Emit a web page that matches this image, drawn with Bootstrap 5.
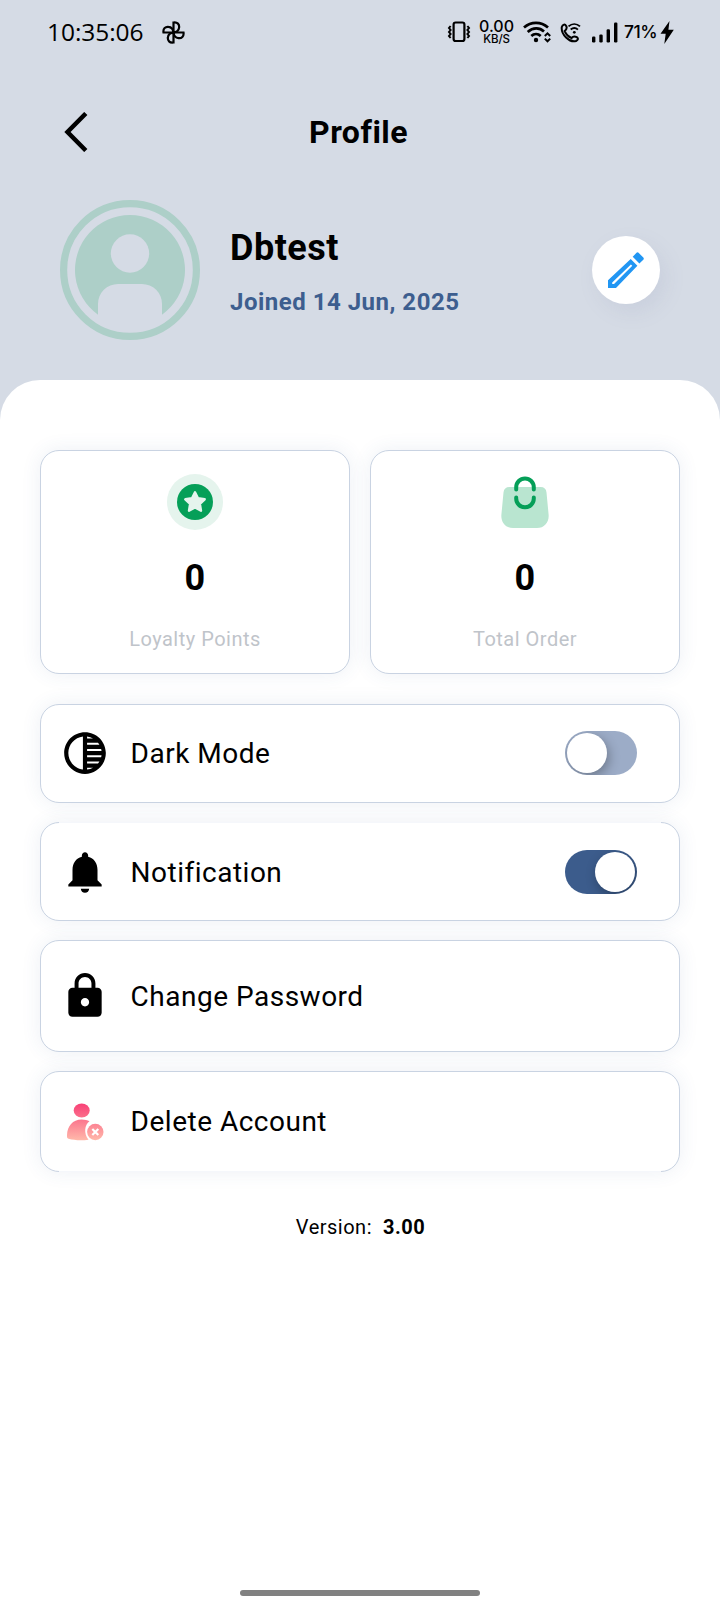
<!DOCTYPE html>
<html lang="en">
<head>
<meta charset="utf-8">
<meta name="viewport" content="width=device-width, initial-scale=1">
<title>Profile</title>
<link href="https://cdn.jsdelivr.net/npm/bootstrap@5.3.0/dist/css/bootstrap.min.css" rel="stylesheet">
<style>
  :root { --haze: #d5dbe5; --navy: #3c5c8c; --line: #c9d3e2; }
  body { font-family: Roboto, "Liberation Sans", sans-serif; color: #000; background: var(--haze); letter-spacing: .5px; }
  .screen { width: 720px; height: 1600px; }
  svg { display: block; flex: none; }
  .status { height: 64px; padding-left: 47px; padding-right: 46px; letter-spacing: 0; }
  .clock { font: 400 24.5px/62px "Open Sans", sans-serif; letter-spacing: -.05px; width: 115px; }
  .rate { font: 500 16px/17px Inter, sans-serif; width: 35px; margin-left: 8px; margin-top: -2px; }
  .rate small { font-size: 11.5px; line-height: 11px; margin-top: -1px; letter-spacing: -.1px; }
  .battery { font: 500 17.5px/64px Inter, sans-serif; letter-spacing: -.5px; width: 36px; margin-left: 6px; }
  .topbar { height: 136px; padding: 0 64px; }
  .topbar h1 { font-size: 32px; line-height: 136px; font-weight: 700; width: 97px; margin-left: 221px; }
  .person { height: 180px; padding: 0 60px; }
  .person h2 { font-size: 36px; line-height: 44px; font-weight: 700; margin: 26px 0 0; }
  .joined { font-size: 24px; line-height: 30px; font-weight: 700; color: #3d5e8f; margin-top: 17px; }
  .about { margin-left: 30px; }
  .edit { width: 68px; height: 68px; box-shadow: 6px 8px 20px rgba(120,135,170,.13); margin-top: 36px; }
  .sheet { border-radius: 40px 40px 0 0; padding: 70px 40px 4px; }
  .tile { background: #fff; border: 1px solid var(--line); border-radius: 19px; box-shadow: 0 0 20px rgba(60,92,140,.09); }
  .stat { height: 224px; padding-top: 23px; }
  .stat strong { font-size: 36px; line-height: 40px; margin-top: 28px; }
  .stat span { font-size: 20px; line-height: 24px; color: #bfc4ca; margin-top: 29px; }
  .stats { gap: 20px; margin-bottom: 30px; }
  .option { height: 99px; padding: 0 42px 0 19px; font-size: 28px; line-height: 36px; margin-bottom: 19px; }
  .option > span { margin-left: 20.6px; }
  .option.drop > span { padding-top: 2px; }
  .open-top::before, .open-bottom::after { content: ""; position: absolute; left: 18px; right: 18px; height: 1px; background: #f5f7fb; }
  .open-top::before { top: -1px; }
  .open-bottom::after { bottom: -1px; }
  .tall { height: 112px; }
  .closing { height: 101px; }
  .switch { width: 72px; height: 44px; padding: 2px; background: #9cacc7; overflow: hidden; margin-top: -1px; }
  .switch i { width: 40px; height: 40px; background: #fff; box-shadow: 2px 4px 12px rgba(0,0,0,.3); }
  .switch.on { background: var(--navy); margin-top: 0; }
  .version { font-size: 20px; line-height: 28px; margin-top: 41px; padding-left: 1px; }
  .homebar { width: 240px; height: 6px; background: #818181; }
</style>
</head>
<body>
<div class="screen d-flex flex-column overflow-hidden">
  <div class="status d-flex align-items-center">
    <span class="clock">10:35:06</span>
    <svg width="23" height="23" viewBox="-11.5 -11.5 23 23" fill="none" stroke="#000" stroke-width="2.2">
      <g id="blade"><path d="M0 0V-10C4-10.6 6-8 5.6-5C5.3-2 3.5-.4 0 0Z"/></g>
      <use href="#blade" transform="rotate(90)"/><use href="#blade" transform="rotate(180)"/><use href="#blade" transform="rotate(270)"/>
    </svg>
    <div class="d-flex align-items-center ms-auto">
      <svg width="24" height="22" viewBox="0 0 24 22" fill="none" stroke="#000" stroke-width="2.2">
        <rect x="6.6" y="1.5" width="10.8" height="18.5" rx="2"/>
        <path stroke-width="2" d="M3.600 5 2 7l1.600 2L2 11l1.600 2L2 15l1.600 2M20.400 5 22 7l-1.600 2 1.600 2-1.600 2 1.600 2-1.600 2"/>
      </svg>
      <div class="rate d-flex flex-column align-items-center"><span>0.00</span><small>KB/S</small></div>
      <svg width="28" height="22" viewBox="0 0 28 22" fill="none" stroke="#000" stroke-width="2.7" style="margin-left:9px">
        <path d="M1 6.500C8 .3 18 .3 25 6.500M4.700 11C10 6.300 16.500 6.300 21 10.500M8.300 15C11 12.500 15 12.500 17.700 15"/>
        <circle cx="13" cy="19" r="2.2" fill="#000" stroke="none"/>
        <path stroke-width="2" d="m21.800 15 2.700-2.700 2.700 2.700M21.800 17.600l2.700 2.700 2.700-2.700"/>
      </svg>
      <svg width="21" height="21" viewBox="0 0 21 21" fill="none" stroke="#000" stroke-width="2" style="margin-left:9px">
        <path d="M1.800 5C2.600 2.200 5 1.800 6.300 4.200C7.300 6.400 6.300 7.800 4.600 9C6 12.200 8.300 14.600 11.500 16C13 14.200 14.800 14 16.800 15.200C18.700 16.500 18 18 16 19C9.500 20.800 .8 12.300 1.800 5Z"/>
        <path stroke-width="1.9" d="M8.500 4.400C12 1.300 16.500 1.300 20 4.400M10.700 7.600C13 5.700 15.700 5.700 17.900 7.600"/>
        <circle cx="14.3" cy="10.3" r="1.4" fill="#000" stroke="none"/>
      </svg>
      <svg width="27" height="21" viewBox="0 0 27 21" style="margin-left:10px">
        <rect x="1" y="14.5" width="3.4" height="6" rx="1.2"/><rect x="8.3" y="12.5" width="3.4" height="8" rx="1.2"/><rect x="15.6" y="7.3" width="3.4" height="13.2" rx="1.2"/><rect x="23" y="0.5" width="3.4" height="20" rx="1.2"/>
      </svg>
      <span class="battery">71%</span>
      <svg width="14" height="23" viewBox="0 0 14 23"><path d="M9.500 0 .5 12.800h5.200L4.300 23 13.800 8.800H8.400Z"/></svg>
    </div>
  </div>

  <header class="topbar d-flex align-items-center">
    <svg width="24" height="40" viewBox="0 0 24 40" fill="none" stroke="#000" stroke-width="4.5"><path d="M21.800 1.500 3.500 20l18.300 18.500"/></svg>
    <h1 class="mb-0 text-nowrap">Profile</h1>
  </header>

  <section class="person d-flex">
    <svg width="140" height="140" viewBox="0 0 140 140">
      <circle cx="70" cy="70" r="66.4" fill="none" stroke="#adcfc8" stroke-width="7.2"/>
      <path fill="#adcfc8" d="M38 114.700A55 55 0 1 1 102 114.700V104A20 20 0 0 0 82 84H58A20 20 0 0 0 38 104Z"/>
      <circle cx="70" cy="53.5" r="19.2" fill="#d5dbe5"/>
    </svg>
    <div class="about">
      <h2>Dbtest</h2>
      <div class="joined">Joined 14 Jun, 2025</div>
    </div>
    <div class="edit bg-white rounded-circle ms-auto d-flex align-items-center justify-content-center">
      <svg width="36" height="36" viewBox="0 0 36 36" fill="#2196f3">
        <path fill-rule="evenodd" d="M0 28.300 22.700 7l6.700 6.700L8 36H0ZM4.200 30.500V32h1.800L24.300 13.800 22.900 12.400Z"/>
        <path d="m24.700 4.800 3.800-4q1-1 2.100 0l4.700 4.800q1 1 0 2.100l-3.900 3.900Z"/>
      </svg>
    </div>
  </section>

  <main class="sheet bg-white flex-grow-1 d-flex flex-column">
    <div class="stats d-flex">
      <div class="tile stat flex-fill w-50 d-flex flex-column align-items-center">
        <svg width="56" height="56" viewBox="0 0 56 56">
          <circle cx="28" cy="28" r="28" fill="#e5f4ed"/><circle cx="28" cy="28" r="18" fill="#059f58"/>
          <path fill="#e5f4ed" stroke="#e5f4ed" stroke-width="2.4" stroke-linejoin="round" d="m28 18.300 3 6 6.700 1-4.800 4.600 1.100 6.800-6-3.200-6 3.200 1.100-6.800-4.800-4.600 6.700-1Z"/>
        </svg>
        <strong>0</strong><span>Loyalty Points</span>
      </div>
      <div class="tile stat flex-fill w-50 d-flex flex-column align-items-center">
        <svg width="56" height="56" viewBox="0 0 56 56">
          <path fill="#b9e5d0" d="M12.500 13H43.500Q49 13 49.500 18.500L51.600 40.500C52.300 48 47.500 54 40 54H16C8.500 54 3.700 48 4.400 40.500L6.500 18.500Q7 13 12.500 13Z"/>
          <path fill="none" stroke="#059f58" stroke-width="4" stroke-linecap="round" d="M19.200 15.500V13.200a8.800 8.800 0 0 1 17.600 0V15.500M19.200 23.500V24.500a8.800 8.800 0 0 0 17.600 0V23.500"/>
        </svg>
        <strong>0</strong><span>Total Order</span>
      </div>
    </div>

    <div class="tile option d-flex align-items-center">
      <svg class="mb-1" width="50" height="50" viewBox="0 0 24 24"><path transform="translate(0 .5)" d="M12 2C6.480 2 2 6.480 2 12s4.480 10 10 10 10-4.480 10-10S17.520 2 12 2zm-1 17.930c-3.940-.49-7-3.850-7-7.930s3.050-7.440 7-7.930v15.860zm2-15.860c1.030.13 2 .45 2.870.93H13v-.93zM13 7h5.240c.25.31.48.65.68 1H13V7zm0 3h6.740c.08.33.15.66.19 1H13v-1zm0 9.930V19h2.870c-.87.48-1.840.8-2.870.93zM18.240 17H13v-1h5.920c-.2.35-.43.69-.68 1zm1.500-3H13v-1h6.930c-.04.34-.11.67-.19 1z"/></svg>
      <span>Dark Mode</span>
      <div class="switch rounded-pill ms-auto d-flex"><i class="rounded-circle"></i></div>
    </div>
    <div class="tile option drop open-top position-relative d-flex align-items-center">
      <svg width="50" height="50" viewBox="0 0 24 24"><path d="M12 22c1.100 0 2-.9 2-2h-4c0 1.100.89 2 2 2zm6-6v-5c0-3.070-1.640-5.640-4.500-6.320V4c0-.83-.67-1.500-1.500-1.500s-1.500.67-1.500 1.500v.68C7.630 5.360 6 7.920 6 11v5l-2 2v1h16v-1l-2-2z"/></svg>
      <span>Notification</span>
      <div class="switch on rounded-pill ms-auto d-flex justify-content-end"><i class="rounded-circle"></i></div>
    </div>
    <div class="tile option drop tall d-flex align-items-center">
      <svg width="50" height="50" viewBox="0 0 24 24"><path d="M18 8h-1V6c0-2.760-2.240-5-5-5S7 3.240 7 6v2H6c-1.100 0-2 .9-2 2v10c0 1.100.9 2 2 2h12c1.100 0 2-.9 2-2V10c0-1.100-.9-2-2-2zm-6 9c-1.100 0-2-.9-2-2s.9-2 2-2 2 .9 2 2-.9 2-2 2zm3.100-9H8.900V6c0-1.710 1.390-3.100 3.100-3.100 1.710 0 3.100 1.390 3.100 3.100v2z"/></svg>
      <span>Change Password</span>
    </div>
    <div class="tile option closing open-bottom position-relative d-flex align-items-center mb-0">
      <svg width="50" height="50" viewBox="0 0 50 50">
        <defs><linearGradient id="rose" gradientUnits="userSpaceOnUse" x1="0" y1="6" x2="0" y2="43"><stop offset="0" stop-color="#f83f76"/><stop offset="1" stop-color="#ffb8aa"/></linearGradient></defs>
        <g fill="url(#rose)">
          <ellipse cx="21.7" cy="13.5" rx="8" ry="7"/>
          <path d="M21.700 22.500C25 22.500 27.300 23.200 29.500 24.300C24.500 28 23.500 36.500 28.500 42.700C21 43.700 14 43.200 8.500 41.700C7 41.200 6.900 40 7 38C7.500 29 12.500 22.500 21.700 22.500Z"/>
          <circle cx="35.3" cy="35" r="8.2"/>
        </g>
        <path d="m32.300 32 6 6m0-6-6 6" stroke="#fff" stroke-width="2.2"/>
      </svg>
      <span>Delete Account</span>
    </div>

    <div class="version text-center">Version: &nbsp;<strong>3.00</strong></div>
    <div class="homebar rounded-pill mt-auto mx-auto"></div>
  </main>
</div>
<script src="https://cdn.jsdelivr.net/npm/bootstrap@5.3.0/dist/js/bootstrap.bundle.min.js"></script>
</body>
</html>
